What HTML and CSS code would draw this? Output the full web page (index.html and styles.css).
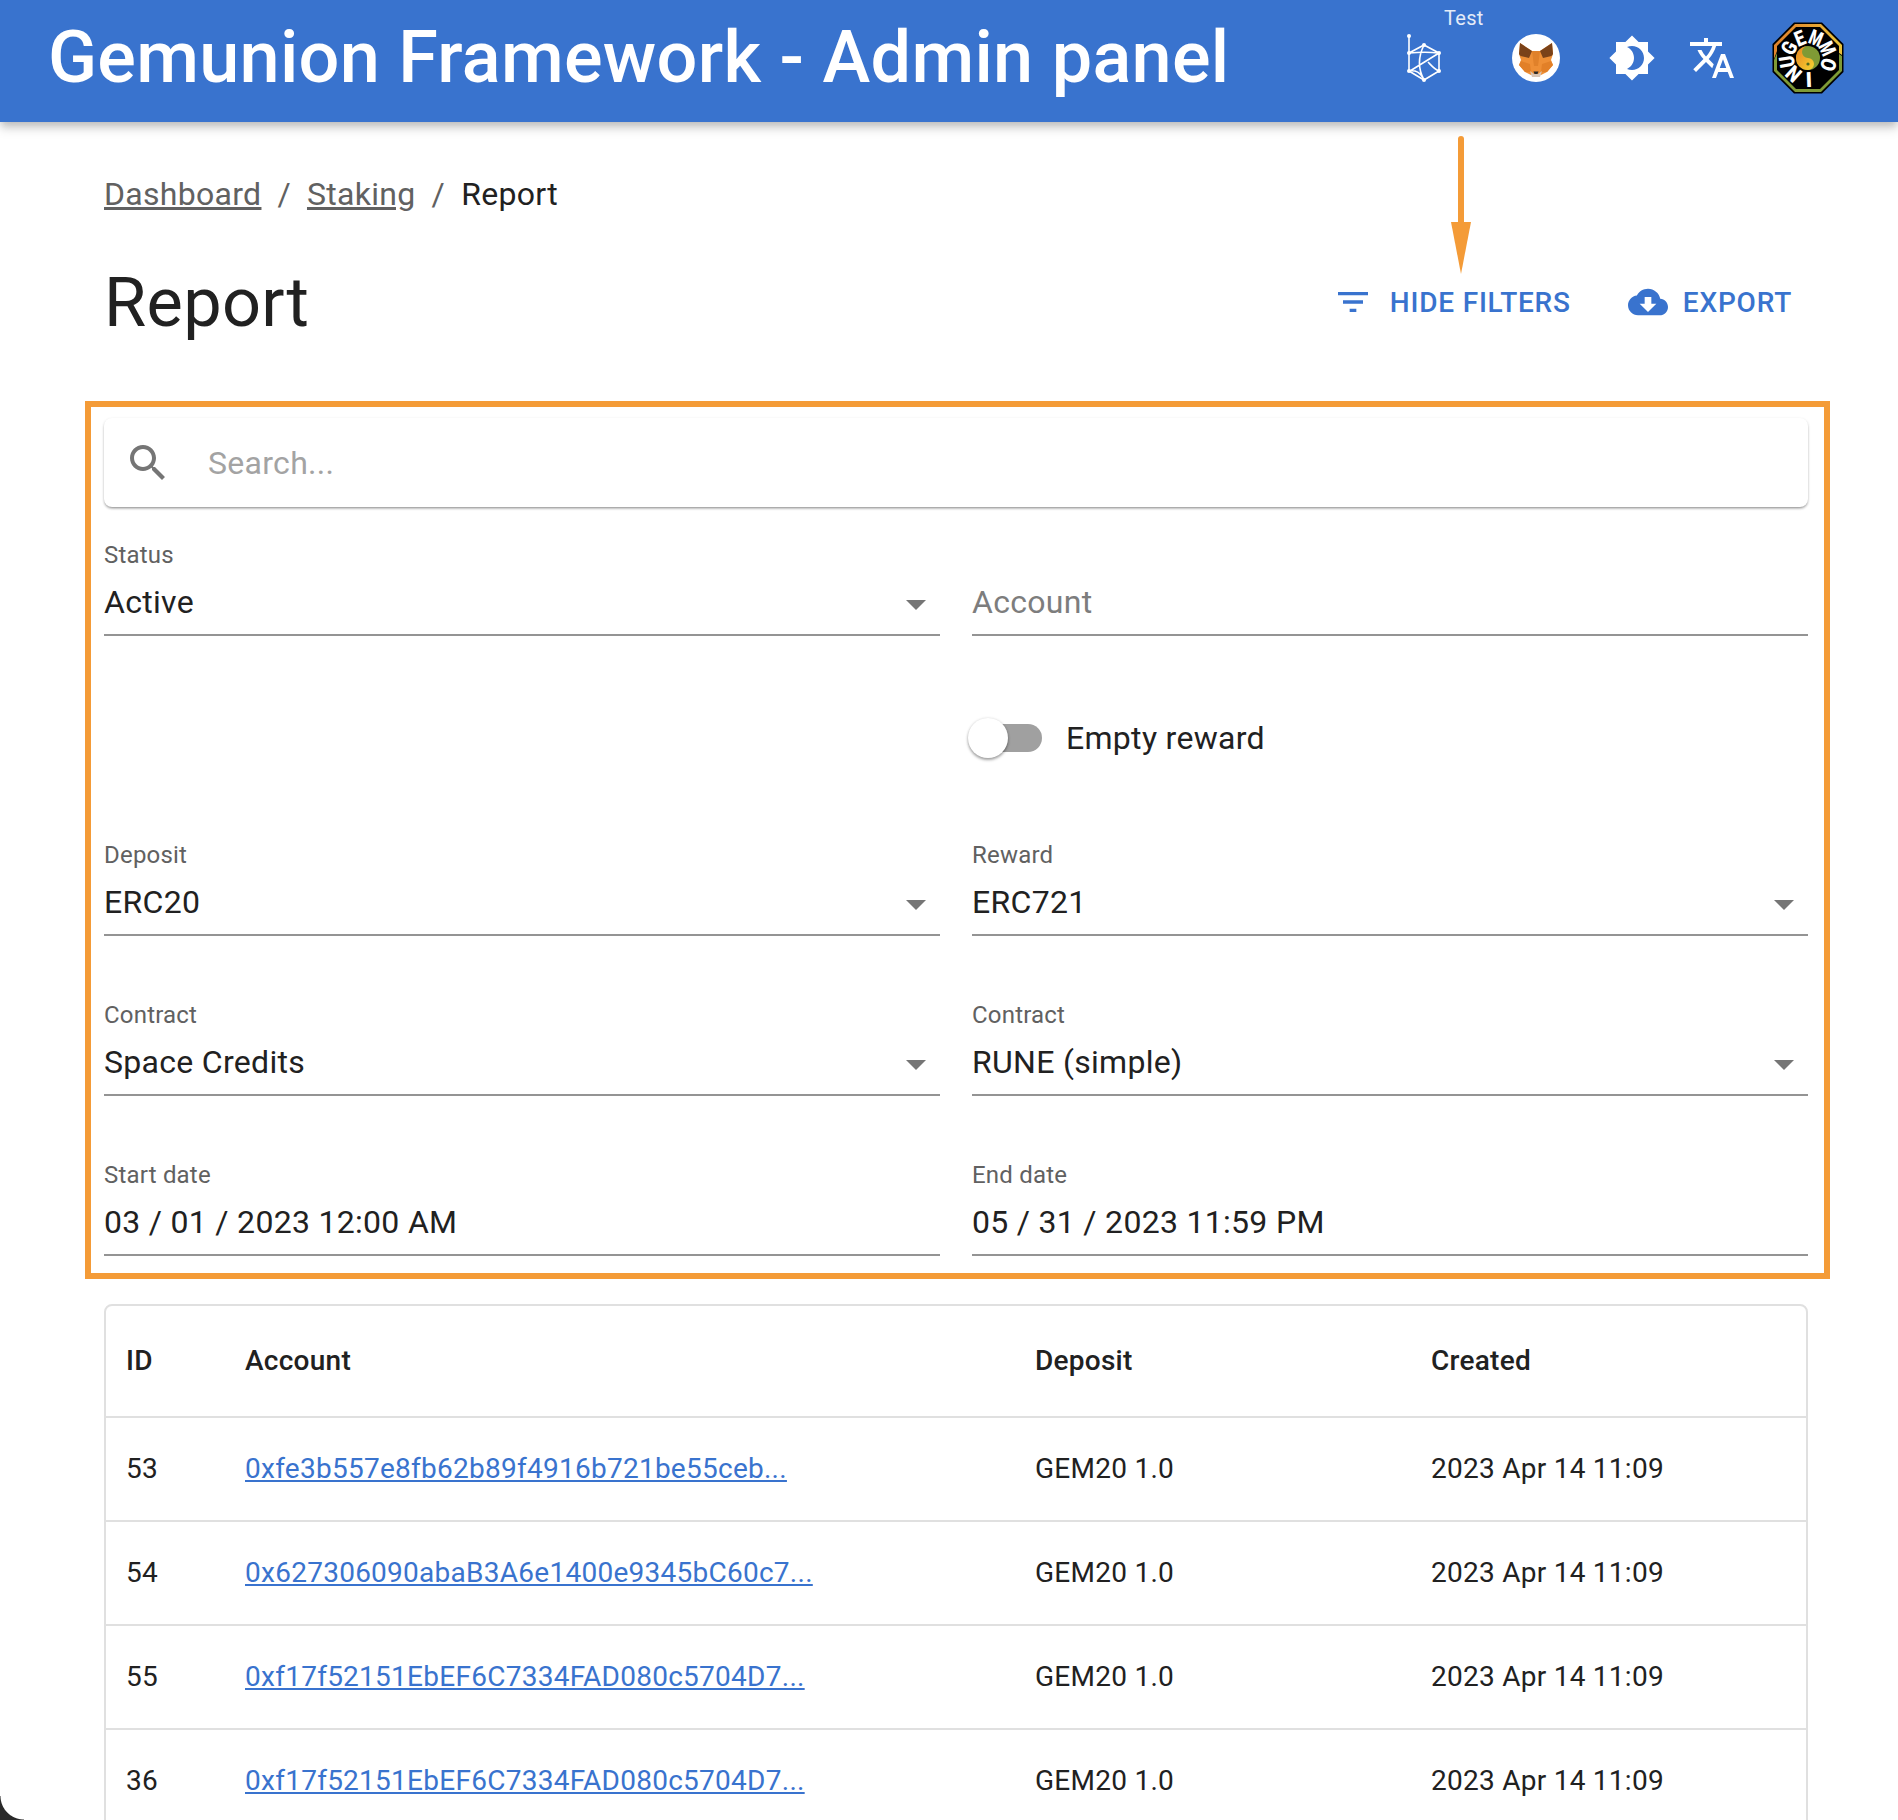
FILE: index.html
```html
<!DOCTYPE html>
<html lang="en">
<head>
<meta charset="utf-8">
<title>Report</title>
<link rel="stylesheet" href="styles.css">
</head>
<body>
<header class="appbar">
  <div class="brand">Gemunion Framework - Admin panel</div>
  <div class="tools">
    <div class="tool tool-network">
      <span class="network-label">Test</span>
      <svg width="38" height="50" viewBox="0 0 38 50" class="network-icon">
        <g fill="none" stroke="#fff" stroke-width="1.6">
          <path d="M3 3V20M3 20L18 12L33 20V38L18 47L3 38V20Z"/>
          <path d="M3 20C14 19 24 19 33 20M33 20L4 38M3 38C10 37 14 39 18 47M18 12C12 24 12 36 18 47M33 38C28 36 25 32 22 29"/>
        </g>
        <g fill="#fff">
          <circle cx="3" cy="3" r="2"/><circle cx="3" cy="20" r="2"/><circle cx="18" cy="12" r="2"/><circle cx="33" cy="20" r="2"/><circle cx="33" cy="38" r="2"/><circle cx="18" cy="47" r="2"/><circle cx="3" cy="38" r="2"/>
        </g>
      </svg>
    </div>
    <div class="tool tool-fox">
      <svg width="48" height="48" viewBox="0 0 48 48">
        <circle cx="24" cy="24" r="24" fill="#fff"/>
        <path fill="#ee8f36" d="M8 9L20 17H28L40 9L41 20L39 26L41 31L35 38L29 41H19L13 38L7 31L9 26L7 20Z"/>
        <path fill="#7a4219" d="M8 9L20 17L17 24L8.500 22L7 20ZM40 9L28 17L31 24L39.500 22L41 20Z"/>
        <path fill="#e0812a" d="M20 17H28L26 32H22Z"/>
        <path fill="#e28028" d="M9 27L18 30L19 38L13 38L7 31ZM39 27L30 30L29 38L35 38L41 31Z"/>
        <path fill="#d8c4b4" d="M18 37L22 40H26L30 37L28 43H20Z"/>
        <path fill="#2a2a2a" d="M21.500 37.500H26.500L25.500 40H22.500Z"/>
      </svg>
    </div>
    <div class="tool tool-theme">
      <svg width="48" height="48" viewBox="0 0 24 24"><path fill="#fff" d="M20 8.690V4h-4.690L12 .69 8.690 4H4v4.690L.69 12 4 15.310V20h4.690L12 23.310 15.310 20H20v-4.690L23.310 12 20 8.690zM12 18c-.89 0-1.740-.2-2.500-.55C11.560 16.500 13 14.420 13 12s-1.440-4.500-3.500-5.450C10.260 6.200 11.110 6 12 6c3.310 0 6 2.690 6 6s-2.690 6-6 6z"/></svg>
    </div>
    <div class="tool tool-lang">
      <svg width="48" height="48" viewBox="0 0 24 24"><path fill="#fff" d="M12.870 15.070l-2.540-2.510.03-.03c1.740-1.940 2.980-4.170 3.710-6.530H17V4h-7V2H8v2H1v1.990h11.170C11.500 7.920 10.400 9.750 9 11.300 8.090 10.290 7.340 9.180 6.750 8h-2c.73 1.630 1.730 3.170 2.980 4.560l-5.090 5.020L4 19l5-5 3.110 3.110.76-2.040zM18.500 10h-2L12 22h2l1.120-3h4.750L21 22h2l-4.500-12zm-2.620 7l1.620-4.330L19.120 17h-3.240z"/></svg>
    </div>
    <div class="tool tool-logo">
      <svg width="72" height="72" viewBox="0 0 72 72">
        <defs>
          <linearGradient id="rim" x1="0" y1="0" x2="1" y2="0.2"><stop offset="0" stop-color="#e07a2a"/><stop offset="1" stop-color="#e8c13a"/></linearGradient>
          <linearGradient id="sun" x1="0" y1="0" x2="1" y2="1"><stop offset="0" stop-color="#e8811f"/><stop offset="1" stop-color="#f5d432"/></linearGradient>
        </defs>
        <path fill="#000" d="M22 .5H50L71.500 22V50L50 71.500H22L.5 50V22Z"/>
        <path fill="url(#rim)" d="M23 2H49L70 23V33L67 31V24L48 5H24L5 24V29L2 37V23Z"/>
        <path fill="#7f9a35" d="M2 38L5 31V48L24 67H48L67 48V32L70 34V49L49 70H23L2 49Z"/>
        <g class="logo-letters" text-anchor="middle">
          <text transform="rotate(-100 36 36) translate(36 22) scale(.85 1)">U</text>
          <text transform="rotate(-62 36 36) translate(36 22) scale(.85 1)">G</text>
          <text transform="rotate(-22 36 36) translate(36 22) scale(.85 1)">E</text>
          <text transform="rotate(22 36 36) translate(36 22) scale(.7 1)">M</text>
          <text transform="rotate(64 36 36) translate(36 22) scale(.7 1)">M</text>
          <text transform="rotate(108 36 36) translate(36 22) scale(.85 1)">O</text>
          <text transform="rotate(178 36 36) translate(36 22)">I</text>
          <text transform="rotate(222 36 36) translate(36 22) scale(.85 1)">N</text>
        </g>
        <circle cx="36" cy="36" r="12" fill="#7f9a35"/>
        <path fill="url(#sun)" d="M36 24A12 12 0 0 0 36 48A6 6 0 0 0 36 36A6 6 0 0 1 36 24Z"/>
        <circle cx="36" cy="30" r="1.600" fill="#7f9a35"/>
        <circle cx="36" cy="42" r="1.600" fill="#4f6a20"/>
      </svg>
    </div>
  </div>
</header>

<main class="page">
  <nav class="crumbs">
    <a class="crumb-link">Dashboard</a><span class="crumb-sep">/</span><a class="crumb-link">Staking</a><span class="crumb-sep">/</span><span class="crumb-current">Report</span>
  </nav>

  <div class="title-row">
    <h1 class="title">Report</h1>
    <div class="actions">
      <div class="action action-filter">
        <svg width="40" height="40" viewBox="0 0 24 24"><path d="M10 18h4v-2h-4v2zM3 6v2h18V6H3zm3 7h12v-2H6v2z"/></svg>
        <span>HIDE FILTERS</span>
      </div>
      <div class="action action-export">
        <svg width="40" height="40" viewBox="0 0 24 24"><path d="M19.350 10.040C18.670 6.590 15.640 4 12 4 9.110 4 6.600 5.640 5.350 8.040 2.340 8.360 0 10.910 0 14c0 3.310 2.690 6 6 6h13c2.760 0 5-2.240 5-5 0-2.640-2.050-4.780-4.650-4.960zM17 13l-5 5-5-5h3V9h4v4h3z"/></svg>
        <span>EXPORT</span>
      </div>
    </div>
  </div>

  <section class="search">
    <svg width="48" height="48" viewBox="0 0 24 24" class="search-icon"><path d="M15.500 14h-.79l-.28-.27C15.410 12.590 16 11.110 16 9.500 16 5.910 13.090 3 9.500 3S3 5.910 3 9.500 5.910 16 9.500 16c1.610 0 3.090-.59 4.230-1.570l.27.28v.79l5 4.990L20.490 19l-4.990-5zm-6 0C7.010 14 5 11.990 5 9.500S7.010 5 9.500 5 14 7.010 14 9.500 11.990 14 9.500 14z"/></svg>
    <span class="search-placeholder">Search...</span>
  </section>

  <section class="filters">
    <div class="field">
      <div class="field-label">Status</div>
      <div class="field-input"><span>Active</span><svg class="caret" width="48" height="48" viewBox="0 0 24 24"><path d="M7 10l5 5 5-5z"/></svg></div>
    </div>
    <div class="field">
      <div class="field-label">&nbsp;</div>
      <div class="field-input"><span class="placeholder">Account</span></div>
    </div>
    <div class="field-empty"></div>
    <div class="switch-row">
      <div class="switch"><div class="switch-track"></div><div class="switch-thumb"></div></div>
      <span>Empty reward</span>
    </div>
    <div class="field">
      <div class="field-label">Deposit</div>
      <div class="field-input"><span>ERC20</span><svg class="caret" width="48" height="48" viewBox="0 0 24 24"><path d="M7 10l5 5 5-5z"/></svg></div>
    </div>
    <div class="field">
      <div class="field-label">Reward</div>
      <div class="field-input"><span>ERC721</span><svg class="caret" width="48" height="48" viewBox="0 0 24 24"><path d="M7 10l5 5 5-5z"/></svg></div>
    </div>
    <div class="field">
      <div class="field-label">Contract</div>
      <div class="field-input"><span>Space Credits</span><svg class="caret" width="48" height="48" viewBox="0 0 24 24"><path d="M7 10l5 5 5-5z"/></svg></div>
    </div>
    <div class="field">
      <div class="field-label">Contract</div>
      <div class="field-input"><span>RUNE (simple)</span><svg class="caret" width="48" height="48" viewBox="0 0 24 24"><path d="M7 10l5 5 5-5z"/></svg></div>
    </div>
    <div class="field">
      <div class="field-label">Start date</div>
      <div class="field-input"><span>03 / 01 / 2023 12:00 AM</span></div>
    </div>
    <div class="field">
      <div class="field-label">End date</div>
      <div class="field-input"><span>05 / 31 / 2023 11:59 PM</span></div>
    </div>
  </section>

  <section class="table">
    <div class="row row-head">
      <div>ID</div><div>Account</div><div>Deposit</div><div>Created</div>
    </div>
    <div class="row">
      <div>53</div><div><a class="addr">0xfe3b557e8fb62b89f4916b721be55ceb...</a></div><div>GEM20 1.0</div><div>2023 Apr 14 11:09</div>
    </div>
    <div class="row">
      <div>54</div><div><a class="addr">0x627306090abaB3A6e1400e9345bC60c7...</a></div><div>GEM20 1.0</div><div>2023 Apr 14 11:09</div>
    </div>
    <div class="row">
      <div>55</div><div><a class="addr">0xf17f52151EbEF6C7334FAD080c5704D7...</a></div><div>GEM20 1.0</div><div>2023 Apr 14 11:09</div>
    </div>
    <div class="row">
      <div>36</div><div><a class="addr">0xf17f52151EbEF6C7334FAD080c5704D7...</a></div><div>GEM20 1.0</div><div>2023 Apr 14 11:09</div>
    </div>
  </section>
</main>

<div class="annot-box"></div>
<svg class="annot-arrow" width="22" height="142" viewBox="0 0 22 142">
  <path d="M11 3V90" stroke="#f49b37" stroke-width="6" stroke-linecap="round" fill="none"/>
  <path d="M1 86H21L11 138Z" fill="#f49b37"/>
</svg>
<div class="corner corner-left"></div>
</body>
</html>
```
FILE: styles.css
```css
* { box-sizing: border-box; }
html, body {
  margin: 0;
  height: 1820px;
  overflow: hidden;
  background: #fff;
  font-family: Roboto, "Liberation Sans", sans-serif;
  color: #212121;
  letter-spacing: .3px;
}
body { position: relative; }

.appbar {
  height: 122px;
  background: #3973ce;
  color: #fff;
  display: flex;
  align-items: center;
  justify-content: space-between;
  padding: 0 54px 0 48px;
  box-shadow: 0 4px 8px -1px rgba(0,0,0,.2), 0 8px 10px 0 rgba(0,0,0,.1);
  position: relative;
}
.brand { font-size: 72px; font-weight: 500; line-height: 1; margin-top: -6px; }
.tools { display: flex; align-items: center; margin-top: -6px; }
.tool { display: flex; align-items: center; justify-content: center; position: relative; }
.tool-network { width: 38px; height: 72px; margin-right: 68px; }
.tool-fox { margin-right: 48px; }
.tool-theme { margin-right: 32px; }
.tool-lang { margin-right: 36px; }
.tool svg { display: block; }
.network-label {
  position: absolute;
  left: 38px;
  top: -16px;
  font-size: 20px;
  line-height: 24px;
  color: #e4ecf8;
}

.page { padding: 48px 90px 0 104px; }

.crumbs { display: flex; align-items: center; font-size: 32px; line-height: 48px; height: 48px; }
.crumb-link { color: #616161; text-decoration: underline; }
.crumb-sep { color: #616161; margin: 0 16px; }
.crumb-current { color: #212121; }

.title-row {
  display: flex;
  align-items: center;
  justify-content: space-between;
  height: 84px;
  margin-top: 43px;
}
.title { margin: 0; font-size: 68.500px; font-weight: 400; line-height: 84px; }
.actions { display: flex; align-items: center; margin-right: 16px; margin-bottom: 2px; }
.action {
  display: flex;
  align-items: center;
  color: #3973ce;
  font-size: 28px;
  font-weight: 500;
  letter-spacing: .8px;
}
.action svg { fill: #3973ce; display: block; }
.action-filter { margin-right: 57px; }
.action-filter svg { margin-right: 17px; }
.action-export svg { margin-right: 15px; }

.search {
  margin-top: 73px;
  height: 89px;
  background: #fff;
  border-radius: 8px;
  box-shadow: 0 2px 3px -1px rgba(0,0,0,.4), 0 1px 3px 0 rgba(0,0,0,.14);
  display: flex;
  align-items: center;
  padding-left: 20px;
}
.search-icon { fill: #757575; display: block; }
.search-placeholder { margin-left: 36px; font-size: 32px; color: #a3a3a3; }

.filters {
  display: grid;
  grid-template-columns: 836px 836px;
  column-gap: 32px;
  margin-top: 33px;
}
.field { height: 160px; }
.field-label { font-size: 24px; line-height: 30px; color: #616161; height: 30px; letter-spacing: .2px; }
.field-input {
  margin-top: 4px;
  height: 62px;
  display: flex;
  align-items: center;
  justify-content: space-between;
  font-size: 32px;
  border-bottom: 2px solid #949494;
  padding-bottom: 4px;
  position: relative;
}
.field-input .caret { fill: #757575; position: absolute; right: 0; top: 6px; display: block; }
.placeholder { color: #7d7d7d; }
.field-empty { height: 140px; }
.switch-row {
  height: 140px;
  display: flex;
  align-items: center;
  font-size: 32px;
  padding-bottom: 64px;
}
.switch { position: relative; width: 74px; height: 40px; margin-right: 20px; flex: none; }
.switch-track { position: absolute; left: 10px; top: 6px; width: 60px; height: 28px; background: #a0a0a0; border-radius: 14px; }
.switch-thumb { position: absolute; left: -4px; top: 0; width: 40px; height: 40px; background: #fff; border-radius: 50%; box-shadow: 0 2px 3px rgba(0,0,0,.35), 0 0 3px rgba(0,0,0,.12); }

.table {
  margin-top: -16px;
  border: 2px solid #e0e0e0;
  border-radius: 8px;
  width: 1704px;
}
.row {
  display: grid;
  grid-template-columns: 119px 790px 396px 1fr;
  height: 104px;
  padding: 0 0 2px 20px;
  align-items: center;
  font-size: 28px;
  border-top: 2px solid #e0e0e0;
  letter-spacing: .26px;
}
.row-head { border-top: 0; height: 110px; font-weight: 500; padding-bottom: 2px; }
.addr { color: #3973ce; text-decoration: underline; }

.annot-box {
  position: absolute;
  left: 85px;
  top: 401px;
  width: 1745px;
  height: 878px;
  border: 6px solid #f49b37;
}
.annot-arrow { position: absolute; left: 1450px; top: 136px; }
.corner {
  position: absolute;
  width: 24px;
  height: 24px;
  bottom: 0;
}
.corner-left { left: 0; background: radial-gradient(circle at 100% 0, transparent 23px, #2a2a2a 24px); }

.logo-letters text { fill: #fff; font-size: 21px; font-weight: 900; font-family: Roboto, sans-serif; letter-spacing: 0; }
```
